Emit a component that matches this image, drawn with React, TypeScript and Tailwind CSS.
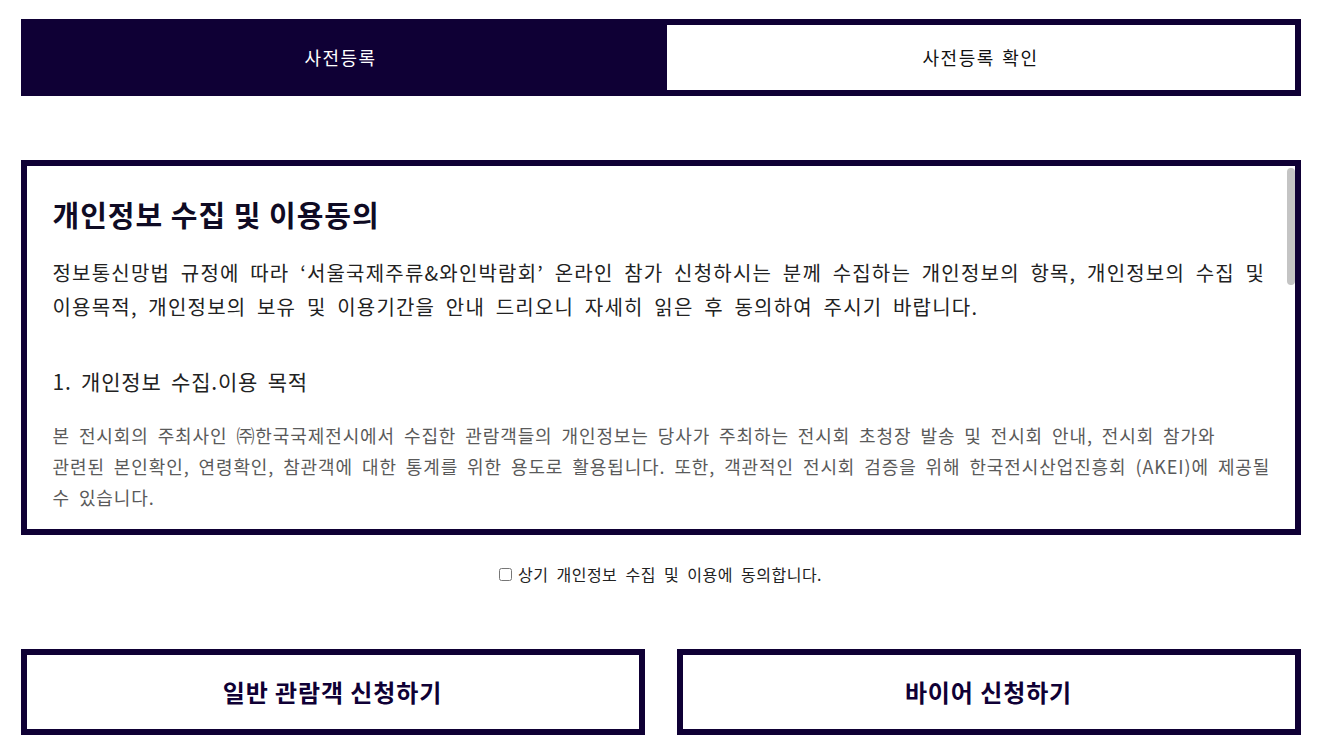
import { useState } from "react";

const font = "font-['Noto_Sans_CJK_KR','Noto_Sans',sans-serif]";

export default function App() {
    const [tab, setTab] = useState(0);
    const [agree, setAgree] = useState(false);

    const tabs = ["사전등록", "사전등록 확인"];

    return (
        <div className={`min-h-screen bg-white pt-[19px] ${font}`}>
            <div className="mx-auto w-[1280px]">
                {/* tabs */}
                <div className="flex h-[77px]">
                    {tabs.map((label, i) => (
                        <button
                            key={label}
                            onClick={() => setTab(i)}
                            className={`flex flex-1 items-center justify-center border-[6px] border-[#0f0035] text-[18px] tracking-[1.5px] [word-spacing:2px] ${
                                tab === i ? "bg-[#0f0035] text-white" : "bg-white text-[#111]"
                            }`}
                        >
                            {label}
                        </button>
                    ))}
                </div>

                {/* consent box */}
                <div className="relative mt-[64px] h-[375px] border-[6px] border-[#0f0035] bg-white">
                    <div className="h-full overflow-hidden px-[26px] pt-[28px]">
                        <h2 className="text-[29px] font-bold leading-[40px] tracking-[1px] text-[#0f0b24]">개인정보 수집 및 이용동의</h2>
                        <p className="mt-[22px] whitespace-nowrap text-[20px] leading-[34px] tracking-[1.2px] text-[#222] [word-spacing:5px]">
                            정보통신망법 규정에 따라 ‘서울국제주류&amp;와인박람회’ 온라인 참가 신청하시는 분께 수집하는 개인정보의 항목, 개인정보의 수집 및
                            <br />
                            이용목적, 개인정보의 보유 및 이용기간을 안내 드리오니 자세히 읽은 후 동의하여 주시기 바랍니다.
                        </p>
                        <h3 className="mt-[42px] text-[21px] leading-[30px] tracking-[0.8px] text-[#222] [word-spacing:4px]">
                            1. 개인정보 수집.이용 목적
                        </h3>
                        <p className="mt-[24px] whitespace-nowrap text-[18px] leading-[31px] tracking-[0.9px] text-[#5a5a5a] [word-spacing:4px]">
                            본 전시회의 주최사인 ㈜한국국제전시에서 수집한 관람객들의 개인정보는 당사가 주최하는 전시회 초청장 발송 및 전시회 안내, 전시회 참가와
                            <br />
                            관련된 본인확인, 연령확인, 참관객에 대한 통계를 위한 용도로 활용됩니다. 또한, 객관적인 전시회 검증을 위해 한국전시산업진흥회 (AKEI)에 제공될
                            <br />
                            수 있습니다.
                        </p>
                        <h3 className="mt-[40px] text-[21px] leading-[30px] tracking-[0.8px] text-[#222] [word-spacing:4px]">
                            2. 수집하는 개인정보 항목
                        </h3>
                        <p className="mt-[24px] text-[18px] leading-[31px] tracking-[0.9px] text-[#5a5a5a] [word-spacing:4px]">
                            성명, 생년월일, 휴대전화번호, 이메일, 회사명, 부서, 직함, 주소
                        </p>
                    </div>
                    <div className="absolute right-0 top-[2px] h-[117px] w-[8px] rounded-full bg-[#c4c4c4]" />
                </div>

                {/* agree */}
                <label className="mt-[27px] flex h-[24px] items-center justify-center gap-[6px] text-[16px] tracking-[0.5px] text-[#222] [word-spacing:4px]">
                    <input
                        type="checkbox"
                        checked={agree}
                        onChange={(e) => setAgree(e.target.checked)}
                        className="m-0 h-[13px] w-[13px]"
                    />
                    상기 개인정보 수집 및 이용에 동의합니다.
                </label>

                {/* apply buttons */}
                <div className="mt-[63px] flex gap-[32px]">
                    <button className="flex h-[86px] flex-1 items-center justify-center border-[6px] border-[#0f0035] bg-white text-[24px] font-bold tracking-[0.9px] text-[#0f0035]">
                        일반 관람객 신청하기
                    </button>
                    <button className="flex h-[86px] flex-1 items-center justify-center border-[6px] border-[#0f0035] bg-white text-[24px] font-bold tracking-[0.9px] text-[#0f0035]">
                        바이어 신청하기
                    </button>
                </div>
            </div>
        </div>
    );
}
